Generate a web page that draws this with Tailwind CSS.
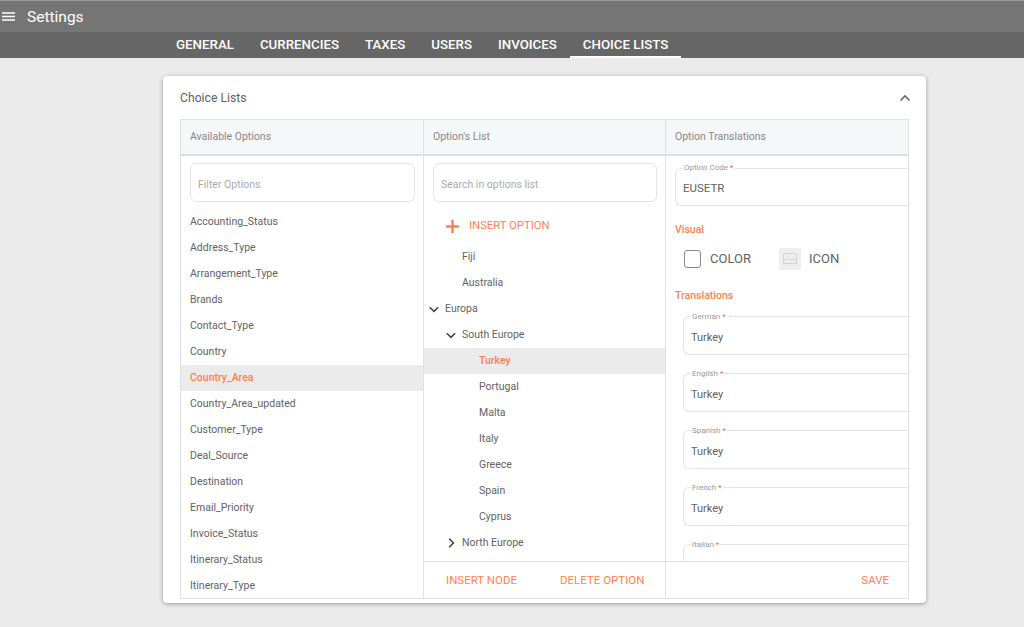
<!doctype html>
<html>
<head>
<meta charset="utf-8">
<script src="https://cdn.jsdelivr.net/npm/@tailwindcss/browser@4"></script>
</head>
<body class="h-[627px] overflow-hidden bg-[#ebebeb] font-['Roboto',sans-serif] text-[#626262]">
  <!-- header -->
  <div class="flex h-[32px] items-center bg-[#757575] border-t border-[#999] text-white">
    <svg class="ml-[1px] h-[13px] w-[14px]" viewBox="0 0 14 13" fill="none" stroke="#fff" stroke-width="1.6"><path d="M1 3h13M1 6.500h13M1 10h13"/></svg>
    <span class="ml-[12px] pt-[2px] text-[15.500px] leading-none">Settings</span>
  </div>
  <div class="flex h-[26px] bg-[#666] pl-[163px] text-[13.300px] font-medium text-white uppercase">
    <a class="flex items-center border-b-2 border-transparent px-[13px] pt-[1px]">General</a>
    <a class="flex items-center border-b-2 border-transparent px-[13px] pt-[1px]">Currencies</a>
    <a class="flex items-center border-b-2 border-transparent px-[13px] pt-[1px]">Taxes</a>
    <a class="flex items-center border-b-2 border-transparent px-[13px] pt-[1px]">Users</a>
    <a class="flex items-center border-b-2 border-transparent px-[13px] pt-[1px]">Invoices</a>
    <a class="flex items-center border-b-2 border-white px-[13px] pt-[1px]">Choice Lists</a>
  </div>

  <!-- card -->
  <div class="ml-[163px] mt-[18px] h-[527px] w-[763px] rounded-[4px] bg-white shadow-[0_1px_4px_rgba(0,0,0,0.35)]">
    <div class="flex h-[43px] items-center justify-between pl-[17px] pr-[15px] pt-[1px] text-[12.200px]">
      <span>Choice Lists</span>
      <svg class="h-[8px] w-[12px]" viewBox="0 0 12 8" fill="none" stroke="#666" stroke-width="1.600"><path d="M1.500 6.500 6 2l4.500 4.500"/></svg>
    </div>

    <div class="mx-[17px] grid h-[480px] w-[729px] grid-cols-[243px_242px_1fr] border border-[#dfe2e5] text-[10.500px]">
      <!-- available options -->
      <div class="flex min-h-0 flex-col border-r border-[#dfe2e5]">
        <div class="flex h-[36px] flex-none items-center border-b-2 border-[#dcdee0] bg-[#f6f7f9] px-[9px] text-[#888]">Available Options</div>
        <div class="ml-[9px] mr-[8px] mt-[7px] flex h-[39px] flex-none items-center rounded-[6px] border border-[#e2e4e6] px-[7px] pt-[5px] text-[#aaa]">Filter Options</div>
        <div class="mt-[7px] flex flex-col">
          <div class="flex h-[26px] items-center px-[9px]">Accounting_Status</div>
          <div class="flex h-[26px] items-center px-[9px]">Address_Type</div>
          <div class="flex h-[26px] items-center px-[9px]">Arrangement_Type</div>
          <div class="flex h-[26px] items-center px-[9px]">Brands</div>
          <div class="flex h-[26px] items-center px-[9px]">Contact_Type</div>
          <div class="flex h-[26px] items-center px-[9px]">Country</div>
          <div class="flex h-[26px] items-center bg-[#ebebeb] px-[9px] font-medium text-[#ff7f50]">Country_Area</div>
          <div class="flex h-[26px] items-center px-[9px]">Country_Area_updated</div>
          <div class="flex h-[26px] items-center px-[9px]">Customer_Type</div>
          <div class="flex h-[26px] items-center px-[9px]">Deal_Source</div>
          <div class="flex h-[26px] items-center px-[9px]">Destination</div>
          <div class="flex h-[26px] items-center px-[9px]">Email_Priority</div>
          <div class="flex h-[26px] items-center px-[9px]">Invoice_Status</div>
          <div class="flex h-[26px] items-center px-[9px]">Itinerary_Status</div>
          <div class="flex h-[26px] items-center px-[9px]">Itinerary_Type</div>
        </div>
      </div>

      <!-- option's list -->
      <div class="flex min-h-0 flex-col border-r border-[#dfe2e5]">
        <div class="flex h-[36px] flex-none items-center border-b-2 border-[#dcdee0] bg-[#f6f7f9] px-[9px] text-[#888]">Option's List</div>
        <div class="ml-[9px] mr-[8px] mt-[7px] flex h-[39px] flex-none items-center rounded-[6px] border border-[#e2e4e6] px-[7px] pt-[5px] text-[#aaa]">Search in options list</div>
        <div class="flex h-[42px] flex-none items-center pl-[22px] pt-[6px] text-[11.300px] text-[#ff7f50]">
          <svg class="h-[13px] w-[13px]" viewBox="0 0 13 13" fill="none" stroke="#ff7f50" stroke-width="2.400"><path d="M6.500 0v13M0 6.500h13"/></svg>
          <span class="ml-[10px]">INSERT OPTION</span>
        </div>
        <div class="flex flex-col">
          <div class="flex h-[26px] items-center pl-[38px]">Fiji</div>
          <div class="flex h-[26px] items-center pl-[38px]">Australia</div>
          <div class="flex h-[26px] items-center pl-[5px]">
            <svg class="h-[7px] w-[10px]" viewBox="0 0 10 7" fill="none" stroke="#444" stroke-width="1.600"><path d="M.8 1.200 5 5.400l4.200-4.200"/></svg>
            <span class="ml-[6px]">Europa</span>
          </div>
          <div class="flex h-[26px] items-center pl-[22px]">
            <svg class="h-[7px] w-[10px]" viewBox="0 0 10 7" fill="none" stroke="#444" stroke-width="1.600"><path d="M.8 1.200 5 5.400l4.200-4.200"/></svg>
            <span class="ml-[6px]">South Europe</span>
          </div>
          <div class="flex h-[26px] items-center bg-[#ebebeb] pl-[55px] font-medium text-[#ff7f50]">Turkey</div>
          <div class="flex h-[26px] items-center pl-[55px]">Portugal</div>
          <div class="flex h-[26px] items-center pl-[55px]">Malta</div>
          <div class="flex h-[26px] items-center pl-[55px]">Italy</div>
          <div class="flex h-[26px] items-center pl-[55px]">Greece</div>
          <div class="flex h-[26px] items-center pl-[55px]">Spain</div>
          <div class="flex h-[26px] items-center pl-[55px]">Cyprus</div>
          <div class="flex h-[26px] items-center pl-[24px]">
            <svg class="h-[10px] w-[7px]" viewBox="0 0 7 10" fill="none" stroke="#444" stroke-width="1.600"><path d="M1.200.8 5.400 5 1.200 9.200"/></svg>
            <span class="ml-[7px]">North Europe</span>
          </div>
        </div>
        <div class="mt-auto flex h-[37px] flex-none items-center border-t border-[#dfe2e5] pl-[22px] pt-[2px] text-[11.500px] text-[#ff7f50]">
          <span>INSERT NODE</span>
          <span class="ml-[43px]">DELETE OPTION</span>
        </div>
      </div>

      <!-- option translations -->
      <div class="flex min-h-0 min-w-0 flex-col">
        <div class="flex h-[36px] flex-none items-center border-b-2 border-[#dcdee0] bg-[#f6f7f9] px-[9px] text-[#888]">Option Translations</div>
        <div class="flex min-h-0 flex-1 flex-col overflow-hidden pl-[9px]">
          <fieldset class="mt-[7px] h-[43px] flex-none rounded-l-[6px] border border-r-0 border-[#e2e4e6] pl-[7px]">
            <legend class="px-[1px] text-[8px] leading-[10px] text-[#999]">Option Code <span class="text-[#ff5a36]">*</span></legend>
            <div class="mt-[7px] text-[11.500px]">EUSETR</div>
          </fieldset>
          <div class="mt-[16px] text-[10.500px] font-medium text-[#ff7f50]">Visual</div>
          <div class="mt-[10px] flex h-[22px] flex-none items-center text-[13px]">
            <span class="ml-[9px] h-[18px] w-[17px] rounded-[3px] border border-[#888]"></span>
            <span class="ml-[9px]">COLOR</span>
            <span class="ml-[28px] flex h-[22px] w-[22px] items-center justify-center bg-[#eee]">
              <svg class="h-[11px] w-[14px]" viewBox="0 0 14 11" fill="none" stroke="#d4d4d4"><path d="M.5.5h13v10H.5zM.5 8l4-3 3 2.500 2.500-2 3.500 3"/></svg>
            </span>
            <span class="ml-[8px]">ICON</span>
          </div>
          <div class="mt-[18px] text-[10.500px] font-medium text-[#ff7f50]">Translations</div>
          <div class="mt-[8px] flex flex-col gap-[14px] pl-[8px]">
            <fieldset class="h-[43px] flex-none rounded-l-[6px] border border-r-0 border-[#e2e4e6] pl-[7px]">
              <legend class="px-[1px] text-[8px] leading-[10px] text-[#999]">German <span class="text-[#ff5a36]">*</span></legend>
              <div class="mt-[8px] text-[11px]">Turkey</div>
            </fieldset>
            <fieldset class="h-[43px] flex-none rounded-l-[6px] border border-r-0 border-[#e2e4e6] pl-[7px]">
              <legend class="px-[1px] text-[8px] leading-[10px] text-[#999]">English <span class="text-[#ff5a36]">*</span></legend>
              <div class="mt-[8px] text-[11px]">Turkey</div>
            </fieldset>
            <fieldset class="h-[43px] flex-none rounded-l-[6px] border border-r-0 border-[#e2e4e6] pl-[7px]">
              <legend class="px-[1px] text-[8px] leading-[10px] text-[#999]">Spanish <span class="text-[#ff5a36]">*</span></legend>
              <div class="mt-[8px] text-[11px]">Turkey</div>
            </fieldset>
            <fieldset class="h-[43px] flex-none rounded-l-[6px] border border-r-0 border-[#e2e4e6] pl-[7px]">
              <legend class="px-[1px] text-[8px] leading-[10px] text-[#999]">French <span class="text-[#ff5a36]">*</span></legend>
              <div class="mt-[8px] text-[11px]">Turkey</div>
            </fieldset>
            <fieldset class="h-[43px] flex-none rounded-l-[6px] border border-r-0 border-[#e2e4e6] pl-[7px]">
              <legend class="px-[1px] text-[8px] leading-[10px] text-[#999]">Italian <span class="text-[#ff5a36]">*</span></legend>
            </fieldset>
          </div>
        </div>
        <div class="flex h-[37px] flex-none items-center justify-end border-t border-[#dfe2e5] pr-[19px] pt-[2px] text-[11.500px] text-[#ff7f50]">SAVE</div>
      </div>
    </div>
  </div>
</body>
</html>
